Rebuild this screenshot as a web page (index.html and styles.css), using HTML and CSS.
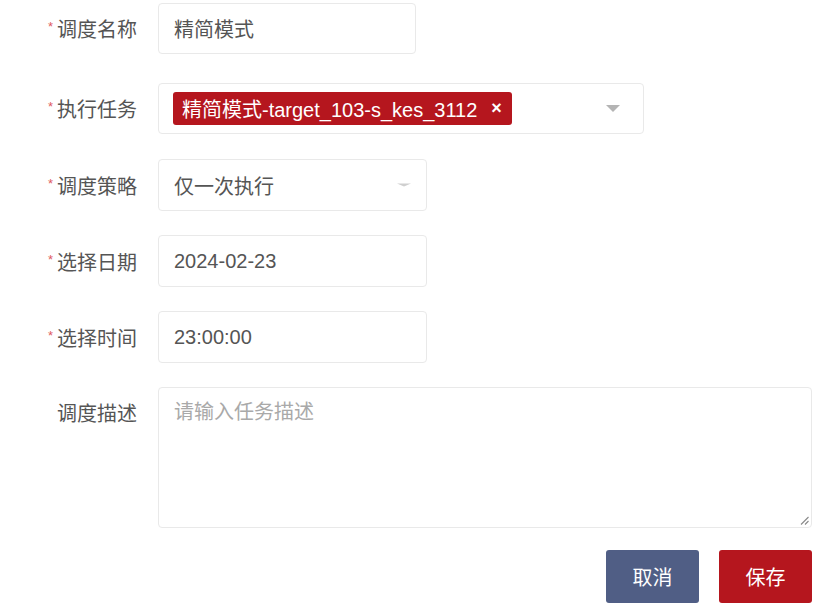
FILE: index.html
```html
<!DOCTYPE html>
<html lang="zh-CN">
<head>
<meta charset="utf-8">
<title>调度设置</title>
<link rel="stylesheet" href="styles.css">
</head>
<body>
<form class="form">
  <div class="row row-first">
    <div class="label"><span class="req">*</span>调度名称</div>
    <div class="field w-name"><span class="value">精简模式</span></div>
  </div>
  <div class="row row-second">
    <div class="label"><span class="req">*</span>执行任务</div>
    <div class="field select w-task">
      <span class="tag">精简模式-target_103-s_kes_3112<span class="tag-close">×</span></span>
      <svg class="caret" width="14" height="7" viewBox="0 0 14 7"><path d="M0 0 L14 0 L7 7 Z" fill="#b4b4b4"/></svg>
    </div>
  </div>
  <div class="row">
    <div class="label"><span class="req">*</span>调度策略</div>
    <div class="field select w-mid">
      <span class="value">仅一次执行</span>
      <svg class="caret caret-flat" width="14" height="4" viewBox="0 0 14 4"><path d="M0 0.5 L14 0.5 L7 3.5 Z" fill="#cfcfcf"/></svg>
    </div>
  </div>
  <div class="row">
    <div class="label"><span class="req">*</span>选择日期</div>
    <div class="field w-mid"><span class="value">2024-02-23</span></div>
  </div>
  <div class="row">
    <div class="label"><span class="req">*</span>选择时间</div>
    <div class="field w-mid"><span class="value">23:00:00</span></div>
  </div>
  <div class="row row-top">
    <div class="label label-top">调度描述</div>
    <div class="field area">
      <span class="placeholder">请输入任务描述</span>
      <svg class="resize" width="9" height="9" viewBox="0 0 9 9"><path d="M8.5 1 L1 8.5 M8.5 5 L5 8.5" stroke="#8a8a8a" stroke-width="1.1" fill="none"/></svg>
    </div>
  </div>
  <div class="actions">
    <button type="button" class="btn btn-cancel">取消</button>
    <button type="button" class="btn btn-save">保存</button>
  </div>
</form>
</body>
</html>
```

FILE: styles.css
```css
* { box-sizing: border-box; }
html, body { margin: 0; padding: 0; background: #fff; }
body {
  font-family: "Liberation Sans", "Noto Sans CJK SC", sans-serif;
  font-size: 20px;
  color: #555;
}
.form {
  width: 812px;
  padding-top: 3px;
  display: flex;
  flex-direction: column;
  gap: 24px;
}
.row {
  display: flex;
  align-items: center;
  gap: 21px;
}
.row-first { margin-bottom: 5px; }
.row-second { margin-bottom: 1px; }
.row-top { align-items: flex-start; }
.label {
  width: 137px;
  display: flex;
  justify-content: flex-end;
  align-items: center;
  white-space: nowrap;
  color: #555;
}
.label-top { height: 51px; }
.req {
  color: #e05a62;
  font-size: 13px;
  margin-right: 4px;
  position: relative;
  top: -2px;
}
.field {
  height: 52px;
  border: 1px solid #e9e9e9;
  border-radius: 4px;
  background: #fff;
  display: flex;
  align-items: center;
  padding: 0 15px;
}
.w-name { width: 258px; height: 51px; }
.w-task { width: 486px; height: 51px; padding-left: 14px; }
.w-mid { width: 269px; }
.select { justify-content: space-between; }
.value { white-space: nowrap; }
.tag {
  background: #b5161e;
  color: #fff;
  border-radius: 3px;
  height: 33px;
  padding: 0 10px 0 9px;
  display: flex;
  align-items: center;
  white-space: nowrap;
}
.tag-close {
  font-weight: bold;
  font-size: 18px;
  margin-left: 14px;
}
.caret { margin-right: 8px; }
.caret-flat { margin-right: 0; }
.area {
  width: 654px;
  height: 141px;
  align-items: flex-start;
  padding-top: 8px;
  position: relative;
}
.placeholder { color: #a9a9a9; }
.resize {
  position: absolute;
  right: 2px;
  bottom: 2px;
}
.actions {
  display: flex;
  justify-content: flex-end;
  gap: 20px;
  margin-top: -2px;
}
.btn {
  width: 93px;
  height: 53px;
  border: none;
  border-radius: 3px;
  color: #fff;
  font-family: "Liberation Sans", "Noto Sans CJK SC", sans-serif;
  font-size: 20px;
  padding: 0;
}
.btn-cancel { background: #505e85; }
.btn-save { background: #b5161e; }
```
